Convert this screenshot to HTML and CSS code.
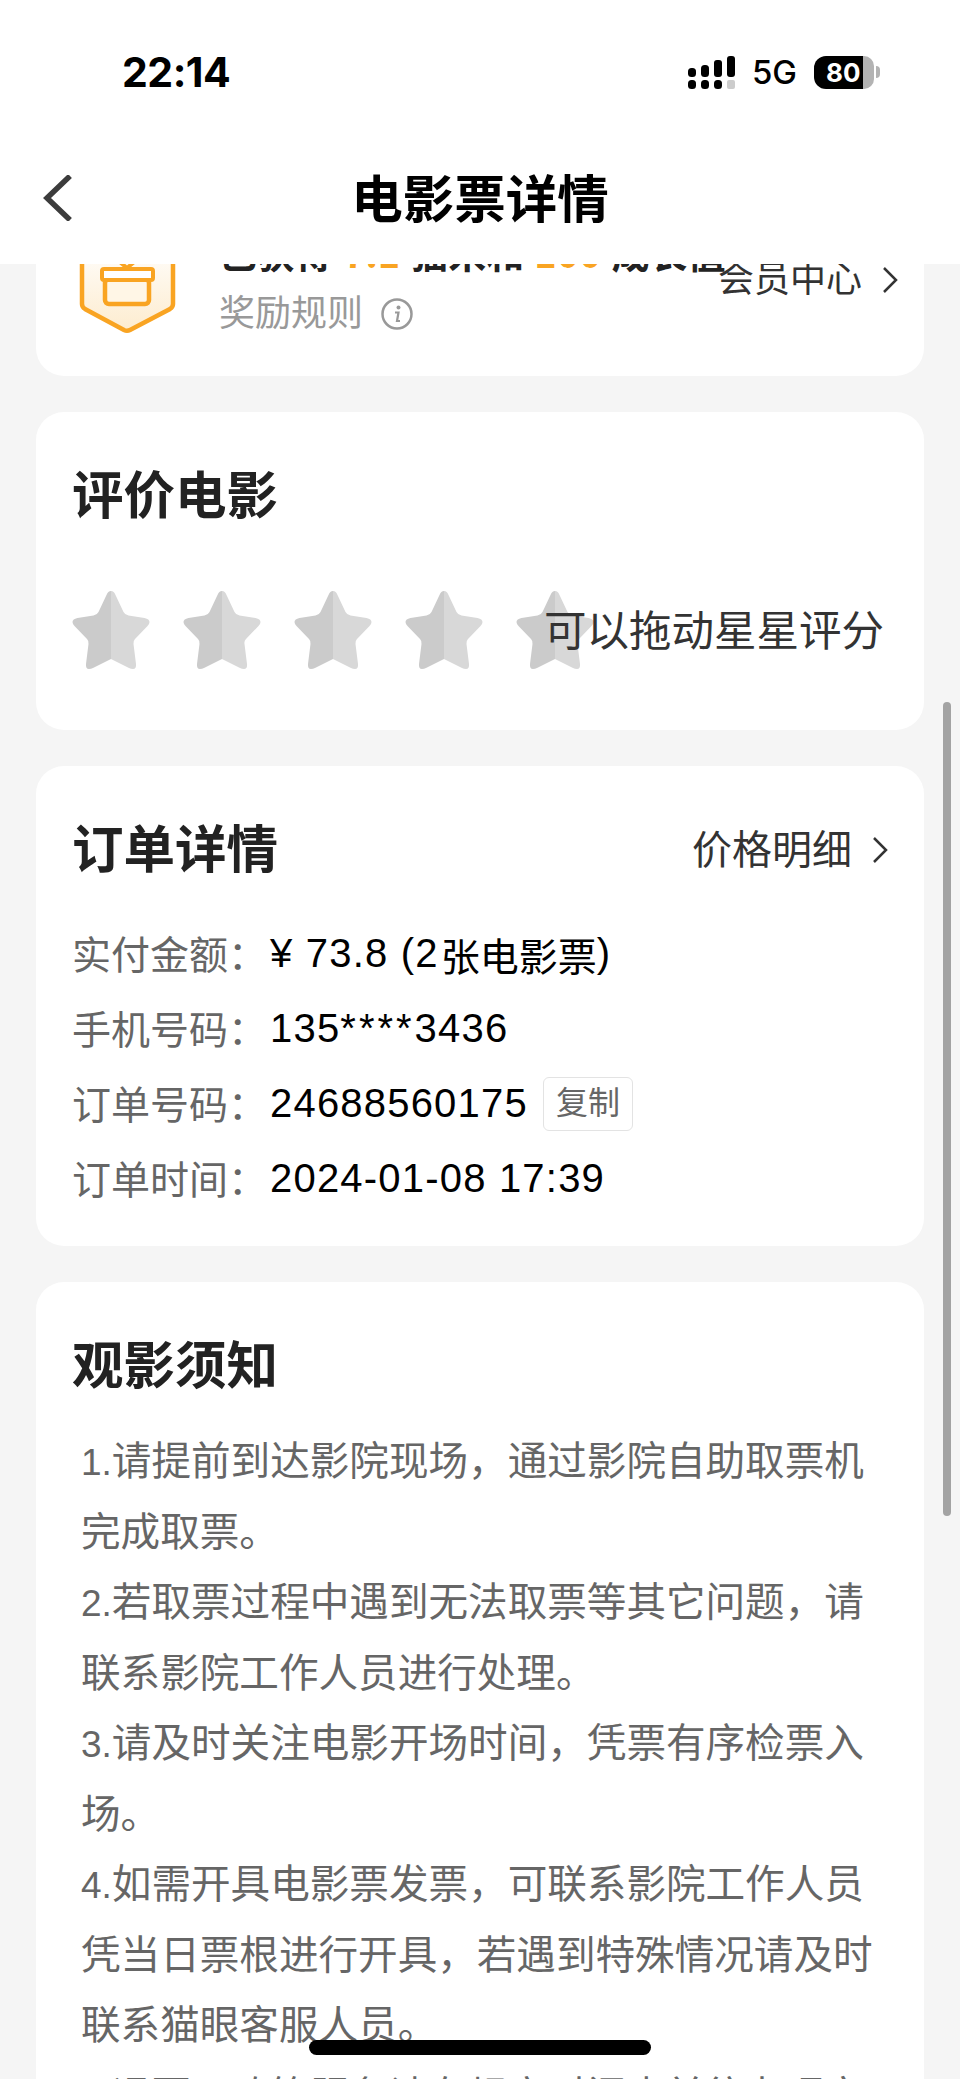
FILE: index.html
```html
<!DOCTYPE html>
<html lang="zh-CN">
<head>
<meta charset="utf-8">
<title>电影票详情</title>
<link rel="stylesheet" href="styles.css">
</head>
<body>
<div class="viewport">
  <header class="topbar">
    <div class="status">
      <span class="clock">22:14</span>
      <div class="status-right">
        <svg class="signal" width="47" height="33" viewBox="0 0 47 33">
          <g fill="#000">
            <rect x="0" y="12" width="8" height="9" rx="3.500"/><rect x="0" y="24" width="8" height="9" rx="3.500"/>
            <rect x="13" y="9" width="8" height="12" rx="3.500"/><rect x="13" y="24" width="8" height="9" rx="3.500"/>
            <rect x="26" y="4" width="8" height="17" rx="3"/><rect x="26" y="24" width="8" height="9" rx="3.500"/>
            <rect x="39" y="0" width="8" height="21" rx="3"/>
          </g>
          <rect x="39" y="24" width="8" height="9" rx="2" fill="#ccc"/>
        </svg>
        <span class="net">5G</span>
        <div class="battery"><span class="battery-fill">80</span><span class="battery-rest"></span><span class="battery-cap"></span></div>
      </div>
    </div>
    <div class="nav">
      <svg class="back" width="30" height="46" viewBox="0 0 30 46"><path d="M27 1 4 23l23 22" fill="none" stroke="#3c3c3c" stroke-width="5.500"/></svg>
      <h1 class="nav-title">电影票详情</h1>
    </div>
  </header>

  <main class="content">
    <section class="card member">
      <svg class="badge" width="100" height="140" viewBox="0 0 100 140">
        <defs><linearGradient id="badgeFill" x1="0" y1="0" x2="0" y2="1"><stop offset=".3" stop-color="#fff"/><stop offset="1" stop-color="#fdeccf"/></linearGradient></defs>
        <path d="M4 2h91v106q0 3-3 5l-40 21q-3 1.500-6 0L7 113q-3-2-3-5z" fill="url(#badgeFill)" stroke="#f9a422" stroke-width="4.500"/>
        <path d="M37 62l12 10 12-10" fill="none" stroke="#f9a422" stroke-width="4"/>
        <rect x="27" y="83" width="44" height="25" rx="4" fill="#fff6e6" stroke="#f9a422" stroke-width="4.500"/>
        <rect x="24" y="73" width="51" height="11" rx="2" fill="#fff" stroke="#f9a422" stroke-width="4"/>
      </svg>
      <div class="member-text">
        <p class="member-line">已获得<em>7.1</em>猫米和<em>100</em>成长值</p>
        <p class="member-rule">奖励规则
          <svg class="info" width="32" height="32" viewBox="0 0 32 32"><circle cx="16" cy="16" r="14.500" fill="none" stroke="#999" stroke-width="2.500"/><circle cx="17.500" cy="9.500" r="2" fill="#999"/><path d="M14 14.500h3.500l-1.500 8.500h3" fill="none" stroke="#999" stroke-width="2.200"/></svg>
        </p>
      </div>
      <a class="link member-link">会员中心
        <svg class="chev" width="16" height="28" viewBox="0 0 16 28"><path d="M2 2l12 12L2 26" fill="none" stroke="#333" stroke-width="2.500"/></svg>
      </a>
    </section>

    <section class="card rate">
      <h2 class="card-title">评价电影</h2>
      <div class="rate-row">
        <div class="stars">
          <svg class="star" width="80" height="80" viewBox="0 0 80 80"><use href="#star"/></svg>
          <svg class="star" width="80" height="80" viewBox="0 0 80 80"><use href="#star"/></svg>
          <svg class="star" width="80" height="80" viewBox="0 0 80 80"><use href="#star"/></svg>
          <svg class="star" width="80" height="80" viewBox="0 0 80 80"><use href="#star"/></svg>
          <svg class="star" width="80" height="80" viewBox="0 0 80 80"><use href="#star"/></svg>
        </div>
        <span class="rate-hint">可以拖动星星评分</span>
      </div>
    </section>

    <section class="card order">
      <div class="order-head">
        <h2 class="card-title">订单详情</h2>
        <a class="link link-price">价格明细
          <svg class="chev" width="16" height="28" viewBox="0 0 16 28"><path d="M2 2l12 12L2 26" fill="none" stroke="#333" stroke-width="2.500"/></svg>
        </a>
      </div>
      <dl class="rows">
        <div class="row"><dt>实付金额：</dt><dd>¥ 73.8 (2<span class="cjk">张电影票</span>)</dd></div>
        <div class="row"><dt>手机号码：</dt><dd>135<span class="mask">****</span>3436</dd></div>
        <div class="row"><dt>订单号码：</dt><dd>24688560175<span class="copy">复制</span></dd></div>
        <div class="row"><dt>订单时间：</dt><dd>2024-01-08 17:39</dd></div>
      </dl>
    </section>

    <section class="card notice">
      <h2 class="card-title">观影须知</h2>
      <div class="notice-text">
        <p><span class="num">1.</span>请提前到达影院现场，通过影院自助取票机完成取票。</p>
        <p><span class="num">2.</span>若取票过程中遇到无法取票等其它问题，请联系影院工作人员进行处理。</p>
        <p><span class="num">3.</span>请及时关注电影开场时间，凭票有序检票入场。</p>
        <p><span class="num">4.</span>如需开具电影票发票，可联系影院工作人员凭当日票根进行开具，若遇到特殊情况请及时联系猫眼客服人员。</p>
        <p><span class="num">5.</span>退票、改签服务请在规定时间内前往办理完成。</p>
      </div>
    </section>
  </main>

  <svg class="defs" width="0" height="0">
    <defs>
      <g id="star">
        <path d="M40 1q3 0 4.500 4l8 17q1.500 3 5 3.500l16 2.500q5 1 5 4 0 2-2 4L64 49q-2 2-1.500 5l2.500 20q.5 5-3 5-2 0-4-1L42 70q-2-1-2-1V1z" fill="#d8d8d8"/>
        <path d="M40 1q-3 0-4.500 4l-8 17q-1.500 3-5 3.500l-16 2.500q-5 1-5 4 0 2 2 4L16 49q2 2 1.500 5l-2.500 20q-.5 5 3 5 2 0 4-1L38 70q2-1 2-1V1z" fill="#cbcbcb"/>
      </g>
    </defs>
  </svg>

  <div class="scrollbar"></div>
  <div class="home-bar"></div>
</div>
</body>
</html>
```

FILE: styles.css
```css
* { box-sizing: border-box; }
html, body { margin: 0; padding: 0; }
body {
  background: #f5f5f5;
  font-family: "Liberation Sans", "Noto Sans CJK SC", sans-serif;
  color: #333;
}
.viewport { position: relative; width: 960px; height: 2079px; overflow: hidden; }

.topbar { position: absolute; top: 0; left: 0; right: 0; height: 264px; background: #fff; z-index: 2; }
.status { height: 142px; padding: 47px 80px 0 122px; display: flex; justify-content: space-between; align-items: flex-start; }
.clock { font: 700 41px/50px "Inter", "Liberation Sans", sans-serif; color: #000; letter-spacing: -.5px; }
.status-right { display: flex; align-items: center; height: 50px; gap: 17px; }
.net { font: 500 33px/36px "Inter", sans-serif; color: #000; }
.battery { display: flex; align-items: center; height: 33px; }
.battery-fill { width: 49px; height: 33px; background: #000; color: #fff; border-radius: 12px 0 0 12px; font: 700 26px/33px "Inter", sans-serif; padding-left: 12px; white-space: nowrap; overflow: hidden; }
.battery-rest { width: 11px; height: 33px; background: #b3b3b3; border-radius: 0 10px 10px 0; }
.battery-cap { width: 4px; height: 12px; margin-left: 2px; background: #b3b3b3; border-radius: 0 6px 6px 0; }

.nav { position: relative; height: 122px; display: flex; align-items: flex-start; justify-content: center; padding-top: 26px; }
.back { position: absolute; left: 43px; top: 33px; }
.nav-title { margin: 0; font: 700 51.500px/56px "Noto Sans CJK SC", sans-serif; color: #000; }

.content { padding: 176px 36px 0; display: flex; flex-direction: column; gap: 36px; }
.card { background: #fff; border-radius: 28px; padding: 0 36px; flex: none; }
.card-title { margin: 0; font: 700 51.500px/60px "Noto Sans CJK SC", sans-serif; color: #222; }

.member { height: 200px; display: flex; align-items: flex-start; padding: 0 26px 0 42px; }
.badge { margin-top: 20px; flex: none; }
.member-text { margin-left: 41px; padding-top: 56px; flex: 1; min-width: 0; }
.member-line { margin: 0; height: 40px; font: 700 38px/40px "Noto Sans CJK SC", sans-serif; color: #222; white-space: nowrap; }
.member-line em { font-style: normal; color: #f9a422; margin: 0 10px; }
.member-rule { margin: 20px 0 0; display: flex; align-items: center; gap: 18px; font-size: 36px; line-height: 44px; color: #999; }
.link { display: flex; align-items: center; gap: 20px; font-size: 36px; line-height: 50px; color: #333; white-space: nowrap; }
.member-link { margin-top: 79px; flex: none; }
.link-price { font-size: 40px; margin-top: 8px; }

.rate { height: 318px; padding-top: 50px; }
.rate-row { position: relative; margin-top: 68px; }
.stars { display: flex; gap: 31px; margin-left: -1px; }
.star { width: 80px; height: 80px; flex: none; }
.rate-hint { position: absolute; right: 4px; top: 17px; font-size: 42.500px; line-height: 50px; color: #333; }

.order { height: 480px; padding-top: 50px; }
.order-head { display: flex; justify-content: space-between; align-items: center; }
.rows { margin: 38px 0 0; }
.row { display: flex; height: 75px; align-items: center; font-size: 39px; }
.row dt { width: 198px; color: #666; flex: none; }
.row dd { margin: 4px 0 0; color: #000; display: flex; align-items: center; font-size: 40px; letter-spacing: 1.200px; white-space: pre; }
.mask { letter-spacing: 3px; }
.cjk { font-size: 39px; letter-spacing: 0; margin-left: 2px; }
.copy { margin-left: 15px; padding: 0 12px; height: 54px; line-height: 50px; border: 1px solid #e3e3e3; border-radius: 6px; font-size: 32px; letter-spacing: 0; color: #666; }

.notice { padding-top: 50px; height: 900px; }
.notice-text { margin-top: 34px; padding: 0 0 0 9px; font-size: 39.600px; line-height: 70.500px; color: #666; }
.notice-text p { margin: 0; }
.num { font-size: 37px; line-height: 1; }

.defs { position: absolute; }
.scrollbar { position: absolute; left: 943px; top: 702px; width: 8px; height: 814px; border-radius: 4px; background: #a3a3a3; z-index: 3; }
.home-bar { position: absolute; left: 309px; top: 2040px; width: 342px; height: 15px; border-radius: 8px; background: #000; z-index: 3; }
```
